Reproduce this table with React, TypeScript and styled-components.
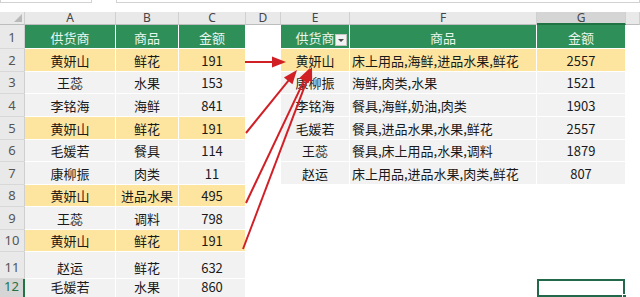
import React from 'react';
import styled, { createGlobalStyle } from 'styled-components';

const GlobalStyle = createGlobalStyle`
  *, *::before, *::after { box-sizing: border-box; }
  html, body { margin: 0; padding: 0; background: #fff; overflow: hidden; }
  body { width: 640px; height: 297px; }
`;

type Tone = 'head' | 'hi' | 'plain' | 'none';

const Page = styled.div`
  position: relative;
  width: 640px;
  height: 297px;
  overflow: hidden;
  background: #fff;
  font-family: "Noto Sans CJK SC", "Noto Sans", sans-serif;
`;

const TopBar = styled.div`
  height: 12px;
  display: flex;
  align-items: flex-start;
  gap: 24px;
`;

const BarBox = styled.div<{ $w?: number }>`
  height: 3px;
  flex: ${({ $w }) => ($w ? `0 0 ${$w}px` : '1')};
  border: 1px solid #d2d2d2;
  border-top: none;
`;

const Sheet = styled.div`
  display: grid;
  grid-template-columns: 25px 91px 63px 67px 35px 69px 187px 89px 14px;
  grid-template-rows: 13px 24px 23px 22px 23px 23px 22px 23px 22px 23px 22px 27px 19px;
`;

const Corner = styled.div`
  position: relative;
  background: #e9e9e9;
  border-right: 1px solid #cfcfcf;
  border-bottom: 1px solid #bdbdbd;
  &::after {
    content: '';
    position: absolute;
    right: 2px;
    bottom: 2px;
    border-left: 8px solid transparent;
    border-bottom: 8px solid #b9b9b9;
  }
`;

const ColHead = styled.div<{ $sel?: boolean }>`
  display: flex;
  align-items: center;
  justify-content: center;
  background: ${({ $sel }) => ($sel ? '#d5d5d5' : '#e9e9e9')};
  border-right: 1px solid #d0d0d0;
  border-bottom: ${({ $sel }) => ($sel ? '2px solid #217346' : '1px solid #bdbdbd')};
  font: 12px/1 "Noto Sans", sans-serif;
  color: #454545;
`;

const RowHead = styled.div<{ $sel?: boolean }>`
  display: flex;
  align-items: flex-end;
  justify-content: center;
  padding-bottom: 2px;
  background: ${({ $sel }) => ($sel ? '#d5d5d5' : '#e9e9e9')};
  border-right: ${({ $sel }) => ($sel ? '2px solid #217346' : '1px solid #cfcfcf')};
  border-bottom: 1px solid #d8d8d8;
  font: 13px/17px "Noto Sans", sans-serif;
  color: ${({ $sel }) => ($sel ? '#217346' : '#555')};
`;

const toneBg: Record<Tone, string> = {
  head: '#2f8f59',
  hi: '#fde5a0',
  plain: '#f2f2f2',
  none: '#ffffff',
};

const Cell = styled.div<{ $tone: Tone; $left?: boolean; $sel?: boolean }>`
  position: relative;
  display: flex;
  align-items: flex-end;
  justify-content: ${({ $left }) => ($left ? 'flex-start' : 'center')};
  padding: 0 2px 2px;
  font-size: 13px;
  line-height: 17px;
  white-space: nowrap;
  background: ${({ $tone }) => toneBg[$tone]};
  color: ${({ $tone }) => ($tone === 'head' ? '#e8f5ed' : '#1a1a1a')};
  border-right: 1px solid #fff;
  border-bottom: 1px solid #fff;
  box-shadow: ${({ $sel }) => ($sel ? 'inset 0 0 0 2px #22684a' : 'none')};
`;

const FilterBtn = styled.span`
  position: absolute;
  right: 2px;
  bottom: 2px;
  width: 12px;
  height: 12px;
  background: #f2f2f2;
  border: 1px solid #c4c4c4;
  display: flex;
  align-items: center;
  justify-content: center;
  &::after {
    content: '';
    border-left: 3px solid transparent;
    border-right: 3px solid transparent;
    border-top: 3px solid #4a4a4a;
  }
`;

const FillHandle = styled.span`
  position: absolute;
  right: -3px;
  bottom: -3px;
  width: 6px;
  height: 6px;
  background: #22684a;
  border: 1px solid #fff;
`;

const Overlay = styled.svg`
  position: absolute;
  left: 0;
  top: 0;
  pointer-events: none;
`;

const cols = ['A', 'B', 'C', 'D', 'E', 'F', 'G', ''];

const left: [string, string, string][] = [
  ['供货商', '商品', '金额'],
  ['黄妍山', '鲜花', '191'],
  ['王蕊', '水果', '153'],
  ['李铭海', '海鲜', '841'],
  ['黄妍山', '鲜花', '191'],
  ['毛媛若', '餐具', '114'],
  ['康柳振', '肉类', '11'],
  ['黄妍山', '进品水果', '495'],
  ['王蕊', '调料', '798'],
  ['黄妍山', '鲜花', '191'],
  ['赵运', '鲜花', '632'],
  ['毛媛若', '水果', '860'],
];

const highlighted = new Set([1, 4, 7, 9]);

const right: [string, string, string][] = [
  ['供货商', '商品', '金额'],
  ['黄妍山', '床上用品,海鲜,进品水果,鲜花', '2557'],
  ['康柳振', '海鲜,肉类,水果', '1521'],
  ['李铭海', '餐具,海鲜,奶油,肉类', '1903'],
  ['毛媛若', '餐具,进品水果,水果,鲜花', '2557'],
  ['王蕊', '餐具,床上用品,水果,调料', '1879'],
  ['赵运', '床上用品,进品水果,肉类,鲜花', '807'],
];

const arrows: [number, number, number, number][] = [
  [245, 62, 286, 62],
  [246, 133, 297, 70],
  [246, 203, 310, 68],
  [243, 249, 312, 67],
];

function Arrow({ a }: { a: [number, number, number, number] }) {
  const [x1, y1, x2, y2] = a;
  const dx = x2 - x1;
  const dy = y2 - y1;
  const len = Math.hypot(dx, dy);
  const ux = dx / len;
  const uy = dy / len;
  const L = 14;
  const W = 5.5;
  const bx = x2 - ux * L;
  const by = y2 - uy * L;
  const nx = -uy;
  const ny = ux;
  const pts = `${x2},${y2} ${bx + nx * W},${by + ny * W} ${bx - nx * W},${by - ny * W}`;
  return (
    <g>
      <line x1={x1} y1={y1} x2={bx + ux * 2} y2={by + uy * 2} stroke="#d11f26" strokeWidth={2} />
      <polygon points={pts} fill="#d11f26" />
    </g>
  );
}

export default function App() {
  return (
    <>
      <GlobalStyle />
      <Page>
        <TopBar>
          <BarBox $w={92} />
          <BarBox />
        </TopBar>
        <Sheet>
          <Corner />
          {cols.map((c, i) => (
            <ColHead key={i} $sel={c === 'G'}>
              {c}
            </ColHead>
          ))}
          {left.map((lr, i) => {
            const lt: Tone = i === 0 ? 'head' : highlighted.has(i) ? 'hi' : 'plain';
            const rr = right[i];
            const rt: Tone = rr ? (i === 0 ? 'head' : i === 1 ? 'hi' : 'plain') : 'none';
            return (
              <React.Fragment key={i}>
                <RowHead $sel={i === 11}>{i + 1}</RowHead>
                {lr.map((v, j) => (
                  <Cell key={j} $tone={lt}>
                    {v}
                  </Cell>
                ))}
                <Cell $tone="none" />
                <Cell $tone={rt}>
                  {rr?.[0]}
                  {i === 0 && <FilterBtn />}
                </Cell>
                <Cell $tone={rt} $left={i !== 0}>
                  {rr?.[1]}
                </Cell>
                <Cell $tone={rt} $sel={i === 11}>
                  {rr?.[2]}
                  {i === 11 && <FillHandle />}
                </Cell>
                <Cell $tone="none" />
              </React.Fragment>
            );
          })}
        </Sheet>
        <Overlay width={640} height={297} viewBox="0 0 640 297">
          {arrows.map((a, i) => (
            <Arrow key={i} a={a} />
          ))}
        </Overlay>
      </Page>
    </>
  );
}
